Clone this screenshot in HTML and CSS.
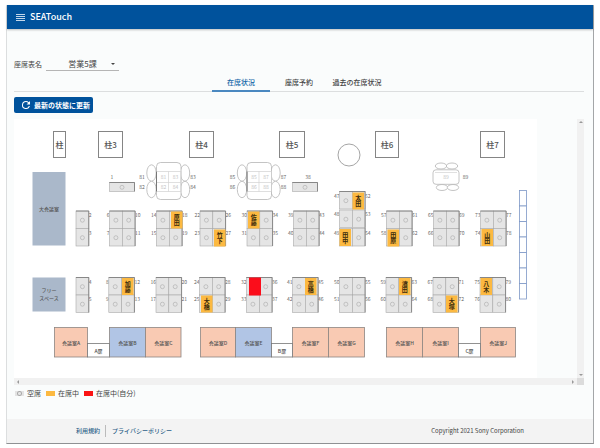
FILE: index.html
```html
<!DOCTYPE html>
<html lang="ja">
<head>
<meta charset="utf-8">
<meta name="viewport" content="width=device-width, initial-scale=1">
<title>SEATouch</title>
<link rel="stylesheet" href="styles.css">
</head>
<body>
<div class="app">
  <header class="app-header">
    <button class="menu-button" type="button" aria-label="メニュー">
      <svg viewBox="0 0 9 7" width="9" height="7" aria-hidden="true"><path d="M0 0.5h9M0 2.5h9M0 4.5h9M0 6.5h9" stroke="currentColor" stroke-width="1" fill="none"/></svg>
    </button>
    <h1 class="app-title">SEATouch</h1>
  </header>

  <main class="content">
    <div class="chart-picker">
      <label for="chart">座席表名</label>
      <span class="select-wrap">
        <select id="chart" class="chart-select"><option>営業5課</option></select>
        <svg class="caret" viewBox="0 0 4 2" width="4" height="2" aria-hidden="true"><path d="M0 0h4L2 2z" fill="currentColor"/></svg>
      </span>
    </div>

    <nav class="tabs">
      <a class="tab tab-active" href="#status">在席状況</a>
      <a class="tab" href="#reserve">座席予約</a>
      <a class="tab" href="#history">過去の在席状況</a>
    </nav>

    <button class="refresh" type="button">
      <svg viewBox="0 0 24 24" width="12" height="12" aria-hidden="true"><path fill="currentColor" d="M17.65 6.35A7.95 7.95 0 0 0 12 4a8 8 0 1 0 7.73 10h-2.08A6 6 0 1 1 12 6c1.66 0 3.14.69 4.22 1.78L13 11h7V4z"/></svg>
      最新の状態に更新
    </button>

    <section class="map-pane">
      <div class="map-view">
        <svg id="floor" class="floor" viewBox="14 119 523 259" width="523" height="259" role="img"></svg>
      </div>
      <div class="bar bar-vertical"><i class="arrow arrow-up"></i><i class="arrow arrow-down"></i></div>
      <div class="bar bar-horizontal"><i class="arrow arrow-left"></i><i class="arrow arrow-right"></i></div>
      <div class="bar-corner"></div>
    </section>

    <ul class="legend">
      <li><span class="swatch swatch-free"></span>空席</li>
      <li><span class="swatch swatch-used"></span>在席中</li>
      <li><span class="swatch swatch-self"></span>在席中(自分)</li>
    </ul>
  </main>

  <footer class="app-footer">
    <nav class="footer-links">
      <a href="#terms">利用規約</a>
      <a href="#privacy">プライバシーポリシー</a>
    </nav>
    <small class="copyright">Copyright 2021 Sony Corporation</small>
  </footer>
</div>
<script src="floor.js"></script>
</body>
</html>
```

FILE: floor.js
```js
const floor = document.getElementById('floor');
const CELL_W = 12.8;
const CELL_H = 17.5;

function add(tag, attrs, text) {
  const el = document.createElementNS('http://www.w3.org/2000/svg', tag);
  for (const key in attrs) el.setAttribute(key, attrs[key]);
  if (text !== undefined) el.textContent = text;
  floor.appendChild(el);
}
const rect = (cls, x1, y1, x2, y2, rx = 0) =>
  add('rect', { class: cls, x: x1, y: y1, width: x2 - x1, height: y2 - y1, rx });
const text = (cls, x, y, value) => add('text', { class: cls, x, y }, value);
const oval = (cx, cy, rx, ry) => add('ellipse', { class: 'chair', cx, cy, rx, ry });

// Pillars
[[53.5, 65.5, ''], [98.5, 122.5, '3'], [189.5, 213.5, '4'], [279.5, 304.5, '5'], [375.5, 398.5, '6'], [480.5, 504.5, '7']]
  .forEach(([x1, x2, n]) => {
    rect('pillar', x1, 131.5, x2, 157.5);
    text('pillar-name', (x1 + x2) / 2, 147.5, '柱' + n);
  });
add('circle', { class: 'pillar pillar-round', cx: 349, cy: 155, r: 11 });

// Blocks of desks: left edge, top edge, left numbers, right numbers
[
  [109.5, 211, [6, 7], [10, 11]],
  [156.5, 211, [14, 15], [18, 19]],
  [200, 211, [22, 23], [26, 27]],
  [247, 211, [30, 31], [34, 35]],
  [293.5, 211, [39, 40], [43, 44]],
  [386.5, 211, [57, 58], [61, 62]],
  [433.5, 211, [65, 66], [69, 70]],
  [480.5, 211, [73, 74], [77, 78]],
  [108.8, 277.5, [8, 9], [12, 13]],
  [156, 277.5, [16, 17], [20, 21]],
  [199.5, 277.5, [24, 25], [28, 29]],
  [246.5, 277.5, [32, 33], [36, 37]],
  [292.5, 277.5, [41, 42], [45, 46]],
  [339.5, 277.5, [50, 51], [55, 56]],
  [386, 277.5, [59, 60], [63, 64]],
  [433, 277.5, [67, 68], [71, 72]],
  [480, 277.5, [75, 76], [79, 80]],
  [339.5, 191.5, [47, 48, 49], [52, 53, 54]],
  [76, 211, [], [2, 3]],
  [76, 277.5, [], [4, 5]]
].forEach(([x, y, left, right]) => {
  const cols = left.length ? 2 : 1;
  const edge = x + cols * CELL_W;
  right.forEach((n, row) => {
    const cy = y + row * CELL_H + (right.length === 3 ? row : 0);
    if (left.length) text('num num-left', x, cy + 6, left[row]);
    text('num', edge, cy + 6, n);
    for (let col = 0; col < cols; col++) {
      rect('desk', x + col * CELL_W, cy, x + (col + 1) * CELL_W, cy + CELL_H);
      add('circle', { class: 'seat', cx: x + col * CELL_W + 6.4, cy: cy + 9.2, r: 2 });
    }
  });
  add('path', { class: 'desk-edge', d: `M${x} ${y}H${edge}V${y + right.length * CELL_H + (right.length === 3 ? 2 : 0)}` });
});

// Single desks
[[109.5, 134.5, 112, 1], [292.5, 317.5, 308, 38]].forEach(([x1, x2, tx, n]) => {
  rect('desk', x1, 182.5, x2, 191.5);
  add('path', { class: 'desk-edge', d: `M${x1} 182.5H${x2}V191.5` });
  add('circle', { class: 'seat', cx: (x1 + x2) / 2, cy: 187.3, r: 2 });
  text('num num-mid', tx, 179, n);
});

// Four-seat tables
[[156.5, 81], [247, 85]].forEach(([x, n]) => {
  [173, 189.5].forEach(cy => { oval(x - 5, cy, 4.7, 8.2); oval(x + 28.5, cy, 4.7, 8.2); });
  rect('table', x, 162.5, x + 24.5, 199.5, 4);
  rect('table-grid', x, 171.5, x + 24.5, 191.5);
  add('path', { class: 'table-grid', d: `M${x + 12} 171.5V191.5M${x} 182.5H${x + 24.5}` });
  add('path', { class: 'table-side', d: `M${x} 171.5V191.5` });
  [[0, 0], [0, 1], [1, 0], [1, 1]].forEach(([col, row]) => {
    const value = n + col * 2 + row;
    text('num num-faint', x + 7 + col * 12, 179 + row * 10, value);
    text('num num-mid', x + (col ? 36.5 : -14.5), 179 + row * 10, value);
  });
});

// Small table
[[441, 166], [452, 166], [442, 187.5], [453, 187.5]].forEach(([cx, cy]) => oval(cx, cy, 5.7, 3));
rect('table', 433, 169.8, 459, 184.3, 3);
add('path', { class: 'table-grid', d: 'M435 172.5H457' });
text('num num-faint', 446, 179, '89');
text('num num-mid', 465.5, 179, '89');

// Occupied seats
[
  [171, 211.5, '原田'], [214, 229.5, '竹下'], [248, 211.5, '佐藤'], [352.5, 192.5, '太田'],
  [339.5, 229, '田中'], [387.5, 229.5, '田原'], [481.5, 229, '山田'], [122, 278, '加藤'],
  [201, 295.5, '大橋'], [305, 278, '高橋'], [399, 278, '濱田'], [446, 295.5, '大塚'], [480.5, 278, '八木']
].forEach(([x, y, name]) => {
  rect('used', x, y, x + 11.5, y + 17);
  text('person', x + 5.7, y + 8.7, name);
});
rect('self', 249, 277.5, 261, 295.5);

// Large areas
rect('area', 32.5, 172, 65.5, 245.5);
text('room-name', 49, 211, '大会議室');
rect('area', 32.5, 277.5, 65.5, 311.5);
text('room-name', 49, 292, 'フリー');
text('room-name', 49, 300, 'スペース');

// Meeting rooms along the lower wall
[
  [54.5, 87.5, 'A'], [109.5, 145.5, 'B'], [145.5, 181, 'C'], [200.5, 235.5, 'D'], [235.5, 271.5, 'E'],
  [292.5, 328.5, 'F'], [328.5, 364.5, 'G'], [386.5, 422.5, 'H'], [422.5, 458.5, 'I'], [480.5, 515.5, 'J']
].forEach(([x1, x2, n]) => {
  rect('BE'.includes(n) ? 'room room-blue' : 'room', x1, 327.5, x2, 357);
  text('room-name', (x1 + x2) / 2, 344.5, '会議室' + n);
});
[[87.5, 109.5, 'A'], [271.5, 292.5, 'B'], [458.5, 480.5, 'C']].forEach(([x1, x2, n]) => {
  rect('door', x1, 343.5, x2, 357);
  text('room-name', (x1 + x2) / 2, 352.5, n + '扉');
});

// Windows on the right wall
for (let i = 0; i < 7; i++) rect('window', 519.5, 190.5 + i * 15.5, 526.5, 206 + i * 15.5);
```

FILE: styles.css
```css
* {
  box-sizing: border-box;
}

body {
  margin: 0;
  padding: 5px 6px 4px;
  background: #fff;
  color: #444;
  font-family: "Noto Sans CJK JP", "Noto Sans", sans-serif;
  font-size: 7px;
  line-height: 12px;
}

button,
select {
  font: inherit;
  color: inherit;
}

a {
  color: inherit;
  text-decoration: none;
}

.app {
  display: flex;
  flex-direction: column;
  min-height: calc(100vh - 9px);
  border-right: 1px solid #a4a6a8;
  border-bottom: 1px solid #8f9193;
  border-left: 1px solid #dcdedf;
  background: #fafcfc;
}

.app-header {
  display: flex;
  align-items: center;
  gap: 5px;
  height: 24px;
  padding: 0 9px;
  background: #00529c;
  box-shadow: 0 1px 2px #00000040;
  color: #fff;
}

.menu-button {
  display: flex;
  padding: 0;
  border: 0;
  background: none;
  color: #c3d7ea;
}

.app-title {
  margin: 0;
  font-size: 9px;
  font-weight: 500;
}

.content {
  display: flex;
  flex: 1;
  flex-direction: column;
  padding: 28px 9px 0 7px;
}

.chart-picker {
  display: flex;
  align-items: center;
  gap: 4px;
  height: 14px;
}

.select-wrap {
  display: grid;
  align-items: center;
  width: 73px;
  height: 14px;
  border-bottom: 1px solid #b5b5b5;
}

.chart-select,
.caret {
  grid-area: 1 / 1;
}

.chart-select {
  width: 100%;
  padding: 0;
  border: 0;
  appearance: none;
  background: none;
  font-size: 8px;
  text-align: center;
  text-align-last: center;
}

.caret {
  justify-self: end;
  margin-right: 4px;
}

.tabs {
  display: flex;
  justify-content: center;
  height: 16px;
  margin-top: 5px;
  border-bottom: 1px solid #dcdedf;
}

.tab {
  width: 58px;
  height: 16px;
  border-bottom: 2px solid transparent;
  font-weight: 500;
  text-align: center;
  white-space: nowrap;
}

.tab-active {
  border-bottom-color: #4a88c0;
  color: #1566a8;
}

.refresh {
  display: flex;
  align-items: center;
  align-self: flex-start;
  gap: 2px;
  height: 16px;
  margin-top: 5px;
  padding: 0 3px 0 6px;
  border: 0;
  border-radius: 2px;
  background: #00529c;
  color: #fff;
  font-weight: 700;
}

.map-pane {
  display: grid;
  grid-template-columns: minmax(0, 1fr) 7px;
  grid-template-rows: auto 7px;
  margin-top: 6px;
}

.map-view {
  overflow: hidden;
}

.floor {
  display: block;
  background: #fff;
}

.bar {
  display: flex;
  align-items: center;
  justify-content: space-between;
  background: #f1f1f1;
}

.bar-vertical {
  flex-direction: column;
  padding: 2px 0;
}

.bar-horizontal {
  padding: 0 3px;
}

.bar-corner {
  background: #dcdcdc;
}

.arrow {
  border: 2px solid transparent;
}

.arrow-up {
  border-top-width: 0;
  border-bottom-color: #999;
}

.arrow-down {
  border-bottom-width: 0;
  border-top-color: #999;
}

.arrow-left {
  border-left-width: 0;
  border-right-color: #999;
}

.arrow-right {
  border-right-width: 0;
  border-left-color: #999;
}

.legend {
  display: flex;
  gap: 5px;
  margin: 2px 0 0;
  padding: 0 1px;
  list-style: none;
}

.legend li {
  display: flex;
  align-items: center;
  gap: 3px;
}

.swatch {
  width: 9px;
  height: 5px;
}

.swatch-free {
  background: radial-gradient(circle, #e4e4e4 1px, #aaa 2px, #e4e4e4 3px);
}

.swatch-used {
  background: #fcb941;
}

.swatch-self {
  background: #fb1414;
}

.app-footer {
  display: flex;
  align-items: center;
  justify-content: space-between;
  height: 24px;
  padding: 0 69px;
  background: #f3f3f3;
  font-size: 6px;
}

.footer-links {
  display: flex;
  color: #2d5f88;
  font-weight: 500;
}

.footer-links a + a {
  margin-left: 5px;
  padding-left: 6px;
  border-left: 1px solid #bbb;
}

.copyright {
  font-size: 6px;
}

/* Floor plan */
.floor text {
  fill: #555;
  text-anchor: middle;
}

.floor .pillar {
  fill: #fff;
  stroke: #858585;
}

.floor .pillar-round {
  stroke: #a5a5a5;
}

.floor .pillar-name {
  font-size: 8px;
  font-weight: 500;
}

.floor .desk {
  fill: #e5e5e5;
  stroke: #a8a8a8;
  stroke-width: 0.6px;
}

.floor .desk-edge {
  fill: none;
  stroke: #777;
  stroke-width: 0.8px;
}

.floor .seat {
  fill: none;
  stroke: #aaa;
  stroke-width: 0.6px;
}

.floor .num {
  fill: #666;
  font-size: 5px;
  text-anchor: start;
}

.floor .num-left {
  text-anchor: end;
}

.floor .num-mid,
.floor .num-faint {
  text-anchor: middle;
}

.floor .num-faint {
  fill: #c4c4c4;
}

.floor .chair,
.floor .table {
  fill: #fff;
  stroke: #b5b5b5;
  stroke-width: 0.8px;
}

.floor .table-grid {
  fill: none;
  stroke: #d2d2d2;
  stroke-width: 0.7px;
}

.floor .table-side {
  stroke: #777;
}

.floor .used {
  fill: #fcb941;
}

.floor .self {
  fill: #fb0d1b;
}

.floor .person {
  fill: #3a2a0c;
  font-size: 6px;
  font-weight: 700;
  writing-mode: vertical-rl;
}

.floor .area {
  fill: #aab8ca;
}

.floor .room-name {
  font-size: 5px;
  font-weight: 500;
}

.floor .room {
  fill: #f9cab3;
  stroke: #8c8582;
  stroke-width: 0.8px;
}

.floor .room-blue {
  fill: #b1c5e5;
}

.floor .door {
  fill: #fff;
  stroke: #777;
  stroke-width: 0.8px;
}

.floor .window {
  fill: #fff;
  stroke: #7d97c6;
  stroke-width: 0.8px;
}
```
